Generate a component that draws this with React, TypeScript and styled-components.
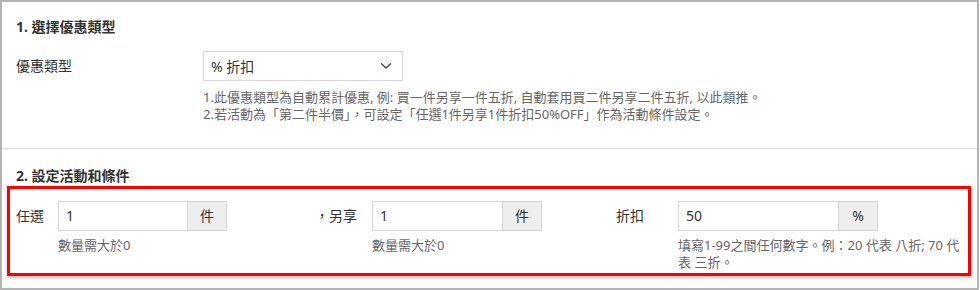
import React from "react";
import styled, { createGlobalStyle } from "styled-components";

const Global = createGlobalStyle`
  html, body { margin: 0; padding: 0; background: #fff; }
  body {
    font-family: "Noto Sans", "Noto Sans CJK TC", sans-serif;
    color: #333;
  }
  * { box-sizing: border-box; }
`;

const Frame = styled.div`
  width: 979px;
  height: 290px;
  border: 2px solid #b4b4b4;
  background: #fff;
  overflow: hidden;
`;

const Section = styled.section<{ $divider?: boolean }>`
  padding: ${(p) => (p.$divider ? "17px 0 0" : "15px 0 25px")};
  border-top: ${(p) => (p.$divider ? "1px solid #dcdcdc" : "none")};
`;

const Heading = styled.h3`
  margin: 0 0 0 14px;
  font-size: 14px;
  line-height: 20px;
  font-weight: 700;
  color: #333;
`;

const FormRow = styled.div`
  display: flex;
  margin: 14px 0 0 14px;
`;

const Label = styled.div<{ $w: number }>`
  width: ${(p) => p.$w}px;
  flex: none;
  font-size: 14px;
  line-height: 30px;
  color: #333;
  white-space: nowrap;
`;

const Field = styled.div<{ $w?: number }>`
  display: flex;
  flex-direction: column;
  width: ${(p) => (p.$w ? `${p.$w}px` : "auto")};
`;

const Select = styled.div`
  width: 200px;
  height: 30px;
  border: 1px solid #d6d6d6;
  display: flex;
  align-items: center;
  justify-content: space-between;
  padding: 0 10px 0 7px;
  font-size: 14px;
  color: #333;
`;

const Help = styled.div<{ $mt: number }>`
  margin-top: ${(p) => p.$mt}px;
  font-size: 13px;
  line-height: 17px;
  color: #666;
`;

const Highlight = styled.div`
  margin: 0 6px 0 5px;
  height: 90px;
  border: 3px solid #ff0000;
  box-shadow: 0 2px 3px rgba(0, 0, 0, 0.25);
  padding: 12px 0 0 6px;
`;

const Conditions = styled.div`
  display: grid;
  grid-template-columns: 299px 301px 1fr;
`;

const Group = styled.div`
  display: flex;
  align-items: flex-start;
`;

const InputGroup = styled.div`
  display: flex;
  height: 30px;
`;

const Input = styled.div<{ $w: number }>`
  width: ${(p) => p.$w}px;
  height: 30px;
  border: 1px solid #d6d6d6;
  border-right: none;
  padding: 0 7px;
  font-size: 14px;
  line-height: 28px;
  color: #333;
`;

const Addon = styled.div`
  width: 40px;
  height: 30px;
  border: 1px solid #d6d6d6;
  background: #eeeeee;
  font-size: 14px;
  line-height: 28px;
  text-align: center;
  color: #333;
`;

const Chevron = () => (
  <svg width="12" height="8" viewBox="0 0 12 8" fill="none">
    <path d="M1.5 1.8 6 6 10.5 1.8" stroke="#444" strokeWidth="1.4" strokeLinecap="round" strokeLinejoin="round" />
  </svg>
);

export default function App() {
  return (
    <>
      <Global />
      <Frame>
        <Section>
          <Heading>1. 選擇優惠類型</Heading>
          <FormRow>
            <Label $w={187}>優惠類型</Label>
            <Field>
              <Select>
                <span>% 折扣</span>
                <Chevron />
              </Select>
              <Help $mt={8}>
                1.此優惠類型為自動累計優惠, 例: 買一件另享一件五折, 自動套用買二件另享二件五折, 以此類推。
                <br />
                2.若活動為「第二件半價」，可設定「任選1件另享1件折扣50%OFF」作為活動條件設定。
              </Help>
            </Field>
          </FormRow>
        </Section>
        <Section $divider>
          <Heading>2. 設定活動和條件</Heading>
          <Highlight>
            <Conditions>
              <Group>
                <Label $w={42}>任選</Label>
                <Field>
                  <InputGroup>
                    <Input $w={129}>1</Input>
                    <Addon>件</Addon>
                  </InputGroup>
                  <Help $mt={6}>數量需大於0</Help>
                </Field>
              </Group>
              <Group>
                <Label $w={57}>，另享</Label>
                <Field>
                  <InputGroup>
                    <Input $w={130}>1</Input>
                    <Addon>件</Addon>
                  </InputGroup>
                  <Help $mt={6}>數量需大於0</Help>
                </Field>
              </Group>
              <Group>
                <Label $w={62}>折扣</Label>
                <Field $w={284}>
                  <InputGroup>
                    <Input $w={160}>50</Input>
                    <Addon>%</Addon>
                  </InputGroup>
                  <Help $mt={6}>填寫1-99之間任何數字。例：20 代表 八折; 70 代表 三折。</Help>
                </Field>
              </Group>
            </Conditions>
          </Highlight>
        </Section>
      </Frame>
    </>
  );
}
